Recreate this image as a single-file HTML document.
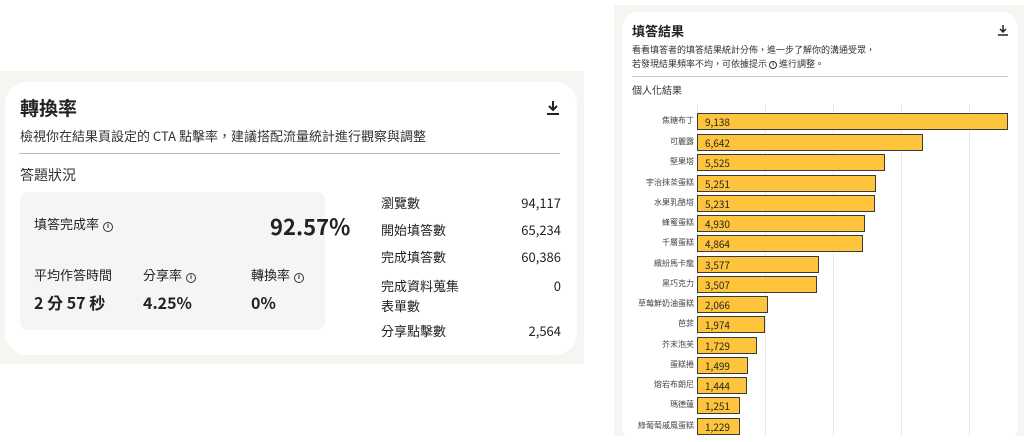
<!DOCTYPE html>
<html><head><meta charset="utf-8"><style>
*{margin:0;padding:0;box-sizing:border-box}
body{width:1024px;height:436px;background:#fff;position:relative;overflow:hidden;font-family:"Noto Sans CJK TC","Liberation Sans",sans-serif;color:#222;line-height:1.2}
.abs{position:absolute}
.bgL{left:0;top:71px;width:584px;height:293px;background:#f6f5f2}
.cardL{left:5px;top:82px;width:572px;height:273px;background:#fff;border-radius:22px}
.bgR{left:614px;top:5px;width:410px;height:431px;background:#f6f5f2}
.cardR{left:622px;top:12px;width:396px;height:430px;background:#fff;border-radius:16px}
.info{display:inline-block;width:10px;height:10px;border:1px solid #333;border-radius:50%;font-size:7px;line-height:8px;text-align:center;vertical-align:1px;margin-left:4px;font-family:"Liberation Sans",sans-serif;font-weight:bold}
.row{position:absolute;left:381px;width:180px;font-size:13px;color:#222;line-height:16px}
.row span{position:absolute;right:0;top:0}
.lbl{position:absolute;right:330px;font-size:8px;color:#444;text-align:right;white-space:nowrap;line-height:10px}
.bar{position:absolute;left:697px;height:17px;background:#fec43c;border:1.5px solid #3a3a3a;font-size:10px;line-height:15px;padding-left:7px;color:#222}
.grid{position:absolute;top:104px;width:1px;height:332px;background:#e8e8e8}
</style></head><body>
<div class="abs bgL"></div>
<div class="abs cardL"></div>
<div class="abs" style="left:20px;top:96px;font-size:19px;font-weight:bold;line-height:24px">轉換率</div>
<svg class="abs" style="left:546px;top:100px" width="14" height="16" viewBox="0 0 14 16"><path d="M7 1v9M3 6l4 4 4-4M1 14h12" stroke="#222" stroke-width="2" fill="none"/></svg>
<div class="abs" style="left:20px;top:128px;font-size:13px;color:#333;line-height:16px">檢視你在結果頁設定的 CTA 點擊率，建議搭配流量統計進行觀察與調整</div>
<div class="abs" style="left:19px;top:153px;width:541px;height:1px;background:#bbb"></div>
<div class="abs" style="left:20px;top:166px;font-size:14px;color:#333;line-height:18px">答題狀況</div>
<div class="abs" style="left:20px;top:192px;width:305px;height:138px;background:#f6f5f3;border-radius:8px"></div>
<div class="abs" style="left:34px;top:216px;font-size:13px;line-height:16px">填答完成率<span class="info">i</span></div>
<div class="abs" style="left:270px;top:212px;font-size:22px;font-weight:bold;line-height:28px">92.57%</div>
<div class="abs" style="left:34px;top:267px;font-size:13px;line-height:16px">平均作答時間</div>
<div class="abs" style="left:143px;top:267px;font-size:13px;line-height:16px">分享率<span class="info">i</span></div>
<div class="abs" style="left:251px;top:267px;font-size:13px;line-height:16px">轉換率<span class="info">i</span></div>
<div class="abs" style="left:34px;top:292px;font-size:16px;font-weight:bold;line-height:20px">2 分 57 秒</div>
<div class="abs" style="left:143px;top:292px;font-size:16px;font-weight:bold;line-height:20px">4.25%</div>
<div class="abs" style="left:251px;top:292px;font-size:16px;font-weight:bold;line-height:20px">0%</div>
<div class="row" style="top:195px">瀏覽數<span>94,117</span></div>
<div class="row" style="top:222px">開始填答數<span>65,234</span></div>
<div class="row" style="top:249px">完成填答數<span>60,386</span></div>
<div class="row" style="top:276px;line-height:20px">完成資料蒐集<br>表單數<span>0</span></div>
<div class="row" style="top:323px">分享點擊數<span>2,564</span></div>

<div class="abs bgR"></div>
<div class="abs cardR"></div>
<div class="abs" style="left:632px;top:23px;font-size:13px;font-weight:bold;line-height:16px">填答結果</div>
<svg class="abs" style="left:998px;top:25px" width="10" height="11" viewBox="0 0 10 11"><path d="M5 0v7M2 4l3 3 3-3M0 10h10" stroke="#222" stroke-width="1.5" fill="none"/></svg>
<div class="abs" style="left:632px;top:43px;font-size:9px;line-height:14px;color:#333">看看填答者的填答結果統計分佈，進一步了解你的溝通受眾，<br>若發現結果頻率不均，可依據提示 <span class="info" style="width:8px;height:8px;font-size:6px;line-height:6px;margin:0">i</span> 進行調整。</div>
<div class="abs" style="left:632px;top:76px;width:376px;height:1px;background:#ccc"></div>
<div class="abs" style="left:632px;top:84px;font-size:10px;color:#333;line-height:12px">個人化結果</div>
<div class="grid" style="left:697px"></div><div class="grid" style="left:765px"></div><div class="grid" style="left:833px"></div><div class="grid" style="left:901px"></div><div class="grid" style="left:969px"></div>

<div class="lbl" style="top:116px">焦糖布丁</div><div class="bar" style="top:113px;width:311px">9,138</div>
<div class="lbl" style="top:137px">可麗露</div><div class="bar" style="top:134px;width:226px">6,642</div>
<div class="lbl" style="top:157px">堅果塔</div><div class="bar" style="top:154px;width:188px">5,525</div>
<div class="lbl" style="top:178px">宇治抹茶蛋糕</div><div class="bar" style="top:175px;width:179px">5,251</div>
<div class="lbl" style="top:198px">水果乳酪塔</div><div class="bar" style="top:195px;width:178px">5,231</div>
<div class="lbl" style="top:218px">蜂蜜蛋糕</div><div class="bar" style="top:215px;width:168px">4,930</div>
<div class="lbl" style="top:238px">千層蛋糕</div><div class="bar" style="top:235px;width:166px">4,864</div>
<div class="lbl" style="top:259px">繽紛馬卡龍</div><div class="bar" style="top:256px;width:122px">3,577</div>
<div class="lbl" style="top:279px">黑巧克力</div><div class="bar" style="top:276px;width:120px">3,507</div>
<div class="lbl" style="top:299px">草莓鮮奶油蛋糕</div><div class="bar" style="top:296px;width:71px">2,066</div>
<div class="lbl" style="top:319px">芭菲</div><div class="bar" style="top:316px;width:68px">1,974</div>
<div class="lbl" style="top:340px">芥末泡芙</div><div class="bar" style="top:337px;width:60px">1,729</div>
<div class="lbl" style="top:360px">蛋糕捲</div><div class="bar" style="top:357px;width:51px">1,499</div>
<div class="lbl" style="top:380px">熔岩布朗尼</div><div class="bar" style="top:377px;width:50px">1,444</div>
<div class="lbl" style="top:400px">瑪德蓮</div><div class="bar" style="top:397px;width:43px">1,251</div>
<div class="lbl" style="top:421px">綠葡萄戚風蛋糕</div><div class="bar" style="top:418px;width:43px">1,229</div>
</body></html>
